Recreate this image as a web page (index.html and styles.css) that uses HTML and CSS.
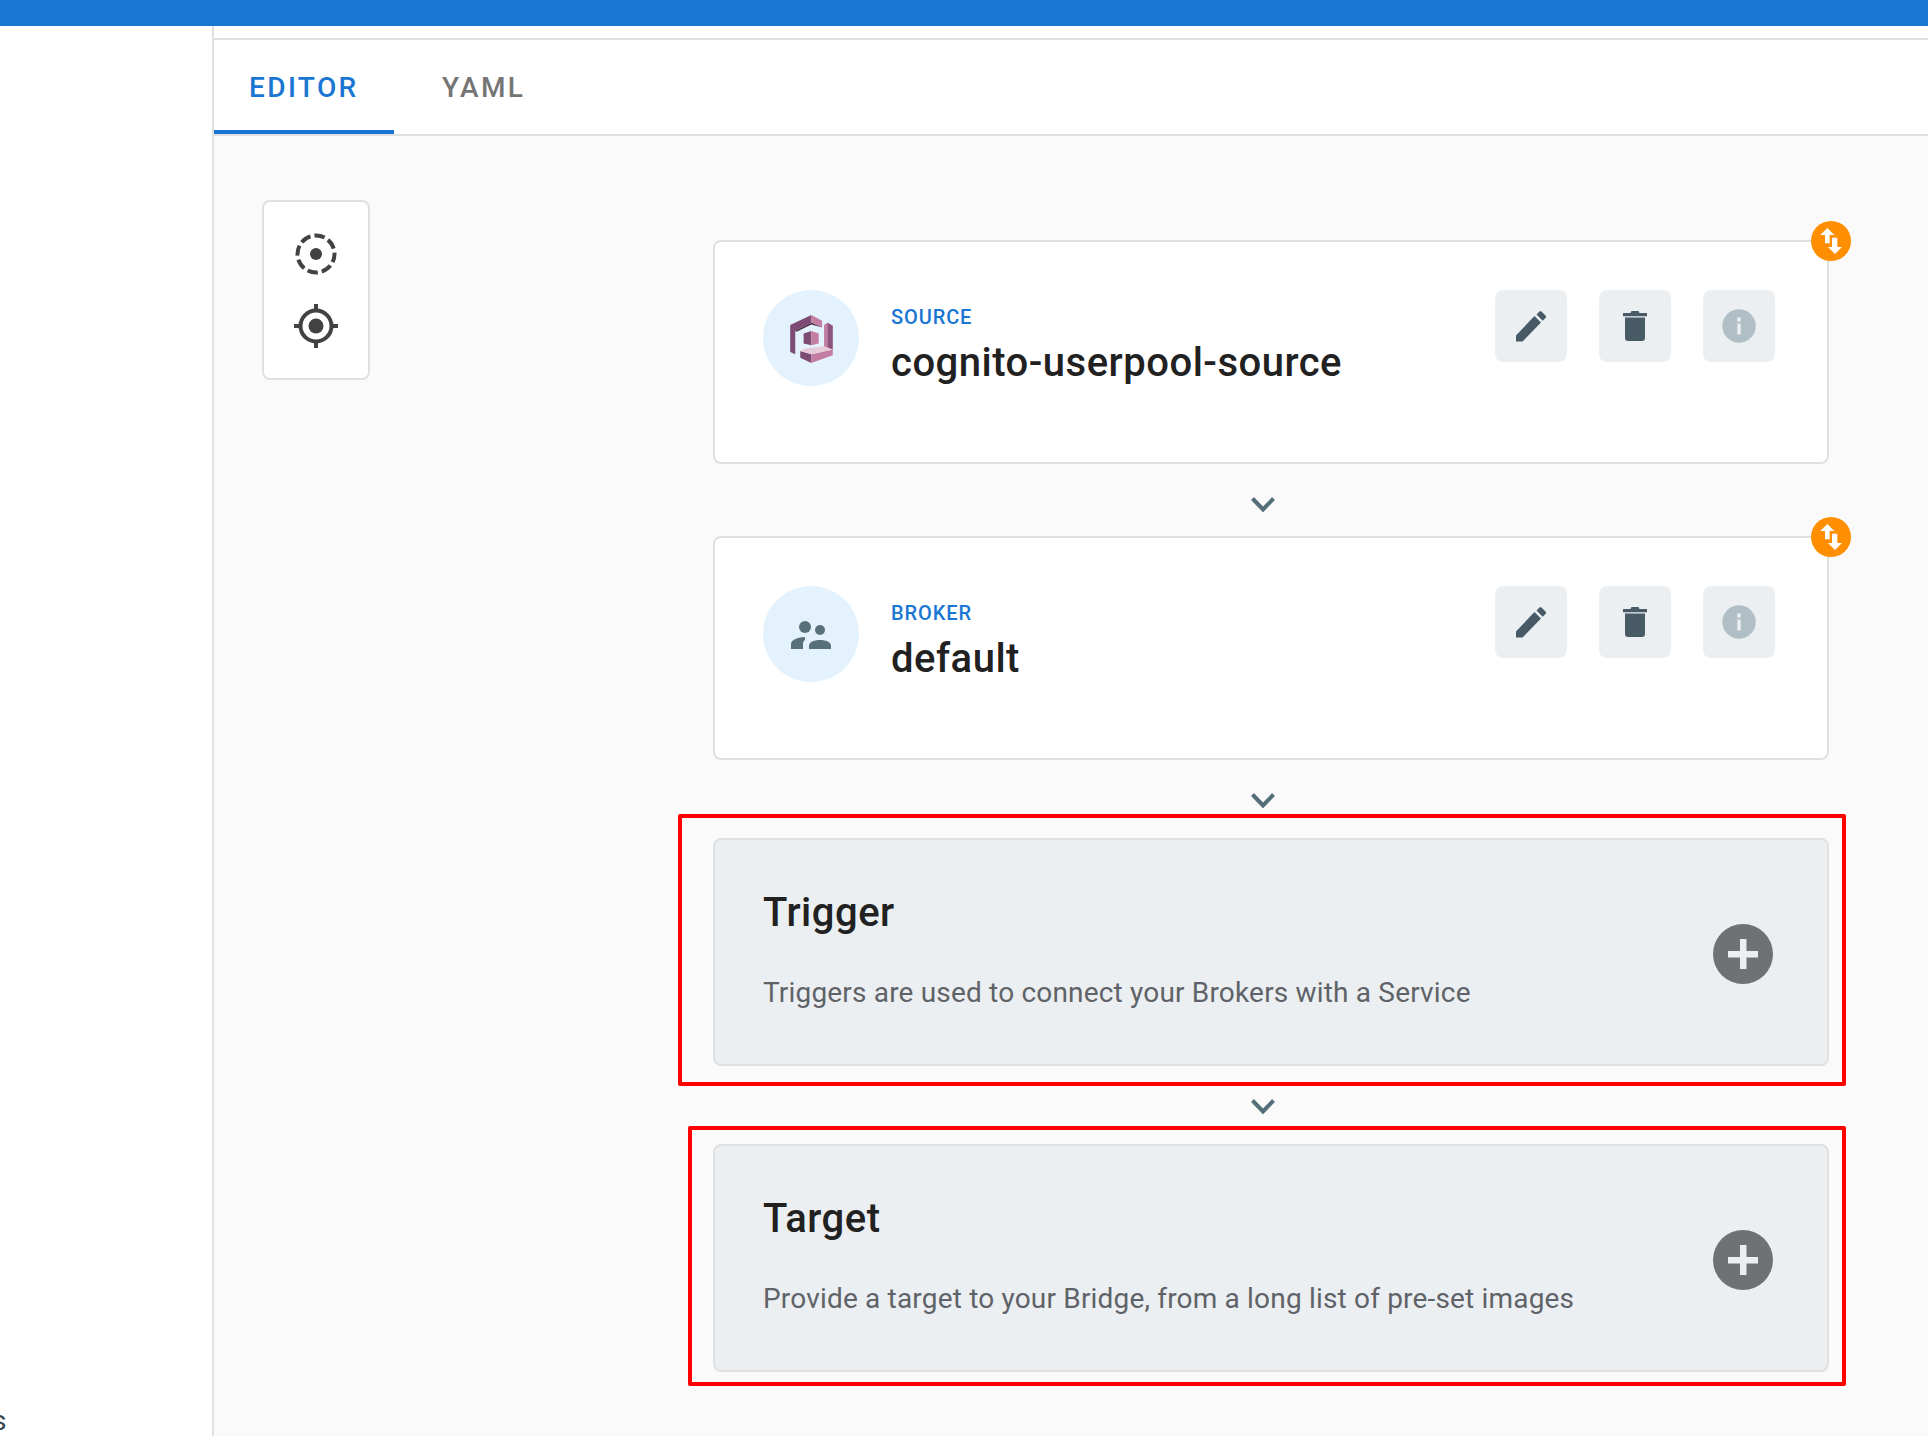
FILE: index.html
```html
<!DOCTYPE html>
<html lang="en">
<head>
<meta charset="utf-8">
<title>Bridge editor</title>
<link rel="stylesheet" href="styles.css">
</head>
<body>
<header class="topbar"></header>
<div class="shell">
  <aside class="sidebar"><span class="side-item">s</span></aside>
  <main class="main">
    <div class="strip"></div>
    <nav class="tabs">
      <a class="tab tab-active">EDITOR</a>
      <a class="tab">YAML</a>
    </nav>
    <div class="canvas">
      <div class="toolbar">
        <svg class="tool" width="44" height="44" viewBox="0 0 44 44"><circle cx="22" cy="22" r="18.5" class="dash"/><circle cx="22" cy="22" r="6" class="ink"/></svg>
        <svg class="tool" width="44" height="44" viewBox="0 0 44 44"><circle cx="22" cy="22" r="15.5" class="ring"/><circle cx="22" cy="22" r="7.5" class="ink"/><path class="ink" d="M20 0h4v6h-4zM20 38h4v6h-4zM0 20h6v4H0zM38 20h6v4h-6z"/></svg>
      </div>
      <div class="flow">
        <section class="card">
          <span class="badge"><svg width="40" height="40" viewBox="0 0 40 40"><path class="white" d="M16.3 7l7 7h-4.600v8.300H14V14H9.300zM21 16.700h5.300V26H31l-7 7-7-7h4z"/></svg></span>
          <div class="avatar">
            <svg width="43" height="48" viewBox="0 0 127 143">
              <path fill="#7d4b73" d="M0 30 63 0v23L15 48v69L0 110z"/>
              <path fill="#c27da0" d="M63 0l32 17v20L63 23z"/>
              <path fill="#47283f" d="M15 48l48-25 32 14-32-9-44 22z"/>
              <path fill="#8d5480" d="M102 30l10-7 15 9v71h-25z"/>
              <path fill="#c27da0" d="M102 30l10-7v80h-10z"/>
              <path fill="#7d4b73" d="M30 107l33 10v26l-33-16z"/>
              <path fill="#c27da0" d="M63 117l64-14v17l-64 23z"/>
              <path fill="#e7cbd9" d="M30 107l15-7 57-7 25 10-64 14z"/>
              <path fill="#7d4b73" d="M40 55l23-7v42l-23-5z"/>
              <path fill="#c27da0" d="M63 48l22 7v30l-22 5z"/>
            </svg>
          </div>
          <div class="meta">
            <div class="kind">SOURCE</div>
            <div class="name">cognito-userpool-source</div>
          </div>
          <div class="actions">
            <button class="action"><svg width="31" height="31" viewBox="0 0 31 31"><path class="slate" d="M0 24.500 18.500 5 25 11.500 6.500 30.500H0zM20.500 3.500l3-3q1-.8 2 0l4.200 4.200q.8 1 0 2l-3 3z"/></svg></button>
            <button class="action"><svg width="24" height="30" viewBox="0 0 24 30"><path class="slate" d="M0 2h7.500l1-2h7l1 2H24v3.300H0zM2 6.500h20V27q0 3-3 3H5q-3 0-3-3z"/></svg></button>
            <button class="action"><svg width="34" height="34" viewBox="0 0 34 34"><circle cx="17" cy="17" r="16.700" fill="#b0bec5"/><path fill="#eceff1" d="M15.300 8.500h3.400v4h-3.400zM15.300 14.500h3.400v11h-3.400z"/></svg></button>
          </div>
        </section>
        <div class="link"><svg width="24" height="15" viewBox="0 0 24 15"><path class="chev" d="M1.500 1.500 12 12.500 22.500 1.500"/></svg></div>
        <section class="card">
          <span class="badge"><svg width="40" height="40" viewBox="0 0 40 40"><path class="white" d="M16.3 7l7 7h-4.600v8.300H14V14H9.300zM21 16.700h5.300V26H31l-7 7-7-7h4z"/></svg></span>
          <div class="avatar">
            <svg width="40" height="28" viewBox="0 0 40 28"><circle cx="14" cy="6" r="6" class="people"/><circle cx="29" cy="9" r="5" class="people"/><path class="people" d="M0 28v-5c0-4 7-7 14-7v3c-1.500 1-2 2.500-2 4v5zM18 28v-3c0-4 5-6 11-6s11 2 11 6v3z"/></svg>
          </div>
          <div class="meta">
            <div class="kind">BROKER</div>
            <div class="name">default</div>
          </div>
          <div class="actions">
            <button class="action"><svg width="31" height="31" viewBox="0 0 31 31"><path class="slate" d="M0 24.500 18.500 5 25 11.500 6.500 30.500H0zM20.500 3.500l3-3q1-.8 2 0l4.200 4.200q.8 1 0 2l-3 3z"/></svg></button>
            <button class="action"><svg width="24" height="30" viewBox="0 0 24 30"><path class="slate" d="M0 2h7.500l1-2h7l1 2H24v3.300H0zM2 6.500h20V27q0 3-3 3H5q-3 0-3-3z"/></svg></button>
            <button class="action"><svg width="34" height="34" viewBox="0 0 34 34"><circle cx="17" cy="17" r="16.700" fill="#b0bec5"/><path fill="#eceff1" d="M15.300 8.500h3.400v4h-3.400zM15.300 14.500h3.400v11h-3.400z"/></svg></button>
          </div>
        </section>
        <div class="link link-wide"><svg width="24" height="15" viewBox="0 0 24 15"><path class="chev" d="M1.500 1.500 12 12.500 22.500 1.500"/></svg></div>
        <section class="card card-add">
          <span class="mark mark-trigger"></span>
          <div class="add-text">
            <h2 class="add-title">Trigger</h2>
            <p class="add-desc">Triggers are used to connect your Brokers with a Service</p>
          </div>
          <button class="add-btn"><svg width="30" height="30" viewBox="0 0 30 30"><path fill="#eceff1" d="M12 0h6.500v12H30v6.500H18.500V30H12V18.500H0V12h12z"/></svg></button>
        </section>
        <div class="link link-wide"><svg width="24" height="15" viewBox="0 0 24 15"><path class="chev" d="M1.500 1.500 12 12.500 22.500 1.500"/></svg></div>
        <section class="card card-add">
          <span class="mark mark-target"></span>
          <div class="add-text">
            <h2 class="add-title">Target</h2>
            <p class="add-desc">Provide a target to your Bridge, from a long list of pre-set images</p>
          </div>
          <button class="add-btn"><svg width="30" height="30" viewBox="0 0 30 30"><path fill="#eceff1" d="M12 0h6.500v12H30v6.500H18.500V30H12V18.500H0V12h12z"/></svg></button>
        </section>
      </div>
    </div>
  </main>
</div>
</body>
</html>
```
FILE: styles.css
```css
* { box-sizing: border-box; }
html, body { margin: 0; height: 100%; }
body {
  width: 1928px;
  height: 1436px;
  overflow: hidden;
  font-family: Roboto, "Liberation Sans", sans-serif;
  background: #fff;
  display: flex;
  flex-direction: column;
}
.topbar { height: 26px; background: #1976d2; flex: none; }
.shell { flex: 1; display: flex; min-height: 0; }
.sidebar {
  width: 214px;
  flex: none;
  background: #fff;
  border-right: 2px solid #e0e0e0;
  overflow: hidden;
  display: flex;
  flex-direction: column;
  justify-content: flex-end;
  align-items: flex-start;
}
.side-item {
  font-size: 28px;
  line-height: 28px;
  margin: 0 0 1px -8px;
  color: #37474f;
}
.main { flex: 1; display: flex; flex-direction: column; min-width: 0; background: #fafafa; }
.strip { height: 14px; background: #fff; border-bottom: 2px solid #e0e0e0; flex: none; }
.tabs {
  height: 96px;
  flex: none;
  display: flex;
  background: #fff;
  border-bottom: 2px solid #e0e0e0;
}
.tab {
  height: 94px;
  padding: 0 36px;
  margin-right: 12px;
  display: flex;
  align-items: center;
  font-size: 28px;
  font-weight: 500;
  letter-spacing: 2.400px;
  color: #757575;
}
.tab-active {
  width: 180px;
  color: #1976d2;
  border-bottom: 4px solid #1976d2;
  padding: 4px 0 0 35px;
}
.canvas {
  flex: 1;
  display: flex;
  align-items: flex-start;
  padding: 64px 0 0 48px;
}
.toolbar {
  width: 108px;
  height: 180px;
  flex: none;
  background: #fff;
  border: 2px solid #e0e0e0;
  border-radius: 8px;
  display: flex;
  flex-direction: column;
  align-items: center;
  gap: 28px;
  padding-top: 30px;
}
.tool { display: block; flex: none; }
.ink { fill: #424242; }
.dash { fill: none; stroke: #424242; stroke-width: 4; stroke-dasharray: 10.500 4; stroke-dashoffset: 2; }
.ring { fill: none; stroke: #424242; stroke-width: 4; }
.flow { width: 1116px; margin: 40px 0 0 343px; flex: none; }
.card {
  position: relative;
  height: 224px;
  background: #fff;
  border: 2px solid #e0e0e0;
  border-radius: 8px;
  padding: 48px 52px 0 48px;
  display: flex;
  align-items: flex-start;
}
.badge {
  position: absolute;
  top: -21px;
  right: -24px;
  width: 40px;
  height: 40px;
  border-radius: 50%;
  background: #ff8f00;
  display: block;
}
.badge svg { display: block; }
.white { fill: #fff; }
.avatar {
  width: 96px;
  height: 96px;
  flex: none;
  border-radius: 50%;
  background: #e3f2fd;
  display: flex;
  align-items: center;
  justify-content: center;
}
.avatar svg { margin-top: 2px; }
.people { fill: #587079; }
.meta { flex: 1; margin-left: 32px; padding-top: 15px; }
.kind {
  font-size: 20px;
  line-height: 24px;
  font-weight: 500;
  color: #1976d2;
  letter-spacing: .9px;
}
.name {
  font-size: 40px;
  line-height: 48px;
  font-weight: 500;
  letter-spacing: .5px;
  color: #212121;
  margin-top: 10px;
}
.actions { display: flex; gap: 32px; flex: none; }
.action {
  width: 72px;
  height: 72px;
  padding: 0;
  border: 0;
  border-radius: 8px;
  background: #eceff1;
  display: flex;
  align-items: center;
  justify-content: center;
}
.slate { fill: #485a66; }
.link {
  height: 72px;
  padding: 33px 16px 0 0;
  display: flex;
  justify-content: center;
  align-items: flex-start;
}
.link-wide { height: 78px; }
.chev { fill: none; stroke: #546e7a; stroke-width: 4; }
.card-add {
  height: 228px;
  background: #eceff1;
  padding: 0 54px 0 48px;
  align-items: center;
}
.mark {
  position: absolute;
  border: 4px solid #f00;
  border-radius: 2px;
  right: -19px;
  pointer-events: none;
}
.mark-trigger { left: -37px; top: -26px; bottom: -22px; }
.mark-target { left: -27px; top: -20px; bottom: -16px; }
.add-text { flex: 1; padding-bottom: 2px; }
.add-title {
  margin: 0;
  font-size: 40px;
  line-height: 48px;
  font-weight: 500;
  letter-spacing: .5px;
  color: #212121;
}
.add-desc {
  margin: 36px 0 0;
  font-size: 28px;
  line-height: 40px;
  letter-spacing: .18px;
  color: #5f6368;
}
.add-btn {
  width: 60px;
  height: 60px;
  padding: 0;
  border: 0;
  border-radius: 50%;
  background: #707173;
  display: flex;
  align-items: center;
  justify-content: center;
  flex: none;
  margin-top: 4px;
}
```
